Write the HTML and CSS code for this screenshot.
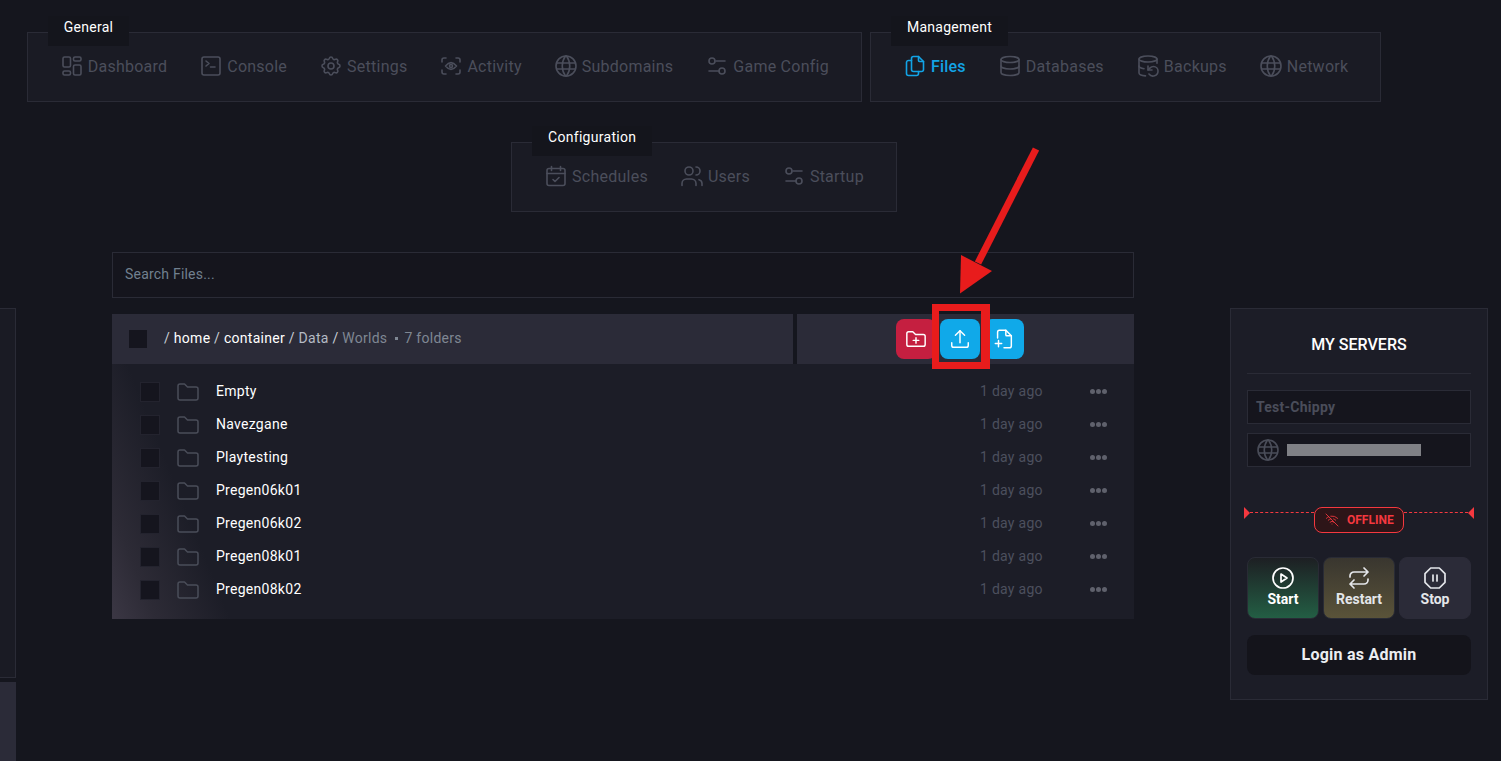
FILE: index.html
```html
<!DOCTYPE html>
<html lang="en">
<head>
<meta charset="utf-8">
<title>Files</title>
<link rel="stylesheet" href="styles.css">
</head>
<body>
<svg class="defs" width="0" height="0" aria-hidden="true">
  <symbol id="i-dash" viewBox="0 0 24 24"><rect x="3" y="3" width="7.5" height="10" rx="1.5"/><rect x="3" y="17" width="7.5" height="4" rx="1.5"/><rect x="13.5" y="3" width="7.5" height="4" rx="1.5"/><rect x="13.5" y="11" width="7.5" height="10" rx="1.5"/></symbol>
  <symbol id="i-term" viewBox="0 0 24 24"><path d="M7 7l3 2.500l-3 2.500M11.500 13h4.500"/><rect x="3" y="3" width="18" height="18" rx="2"/></symbol>
  <symbol id="i-gear" viewBox="0 0 24 24"><path d="M10.325 4.317c.426 -1.756 2.924 -1.756 3.35 0a1.724 1.724 0 0 0 2.573 1.066c1.543 -.94 3.31 .826 2.37 2.37a1.724 1.724 0 0 0 1.065 2.572c1.756 .426 1.756 2.924 0 3.35a1.724 1.724 0 0 0 -1.066 2.573c.94 1.543 -.826 3.31 -2.37 2.37a1.724 1.724 0 0 0 -2.572 1.065c-.426 1.756 -2.924 1.756 -3.35 0a1.724 1.724 0 0 0 -2.573 -1.066c-1.543 .94 -3.31 -.826 -2.37 -2.37a1.724 1.724 0 0 0 -1.065 -2.572c-1.756 -.426 -1.756 -2.924 0 -3.35a1.724 1.724 0 0 0 1.066 -2.573c-.94 -1.543 .826 -3.31 2.37 -2.37c1 .608 2.296 .07 2.572 -1.065z"/><circle cx="12" cy="12" r="3"/></symbol>
  <symbol id="i-activity" viewBox="0 0 24 24"><path d="M3 8V6a2 2 0 0 1 2-2h2M3 16v2a2 2 0 0 0 2 2h2M17 4h2a2 2 0 0 1 2 2v2M17 20h2a2 2 0 0 0 2-2v-2"/><path d="M6.500 12c3.700 -4.500 7.300 -4.500 11 0c-3.700 4.500 -7.300 4.500 -11 0z"/><circle cx="12" cy="12" r="1.500"/></symbol>
  <symbol id="i-globe" viewBox="0 0 24 24"><circle cx="12" cy="12" r="10"/><path d="M2.600 9h18.800M2.600 15h18.800M11.500 2a17 17 0 0 0 0 20M12.500 2a17 17 0 0 1 0 20"/></symbol>
  <symbol id="i-sliders" viewBox="0 0 24 24"><path d="M20 7h-9M14 17H4"/><circle cx="7" cy="7" r="3"/><circle cx="17" cy="17" r="3"/></symbol>
  <symbol id="i-files" viewBox="0 0 24 24"><path d="M15.500 2.500v4a1 1 0 0 0 1 1h4"/><path d="M18.500 17.500h-8a2 2 0 0 1 -2 -2v-11a2 2 0 0 1 2 -2h5l5 5v8a2 2 0 0 1 -2 2z"/><path d="M15.500 17.500v2a2 2 0 0 1 -2 2h-8a2 2 0 0 1 -2 -2v-11a2 2 0 0 1 2 -2h3"/></symbol>
  <symbol id="i-db" viewBox="0 0 24 24"><ellipse cx="12" cy="5.500" rx="9" ry="3"/><path d="M3 5.500v6.500a9 3 0 0 0 18 0v-6.500"/><path d="M3 12v6.500a9 3 0 0 0 18 0v-6.500"/></symbol>
  <symbol id="i-backup" viewBox="0 0 24 24"><ellipse cx="12" cy="5" rx="9" ry="3"/><path d="M3 12a9 3 0 0 0 5 2.690"/><path d="M21 9.300V5"/><path d="M3 5v14a9 3 0 0 0 6.470 2.880"/><path d="M12 12v4h4"/><path d="M13 20a5 5 0 0 0 9-3 4.500 4.500 0 0 0-4.500-4.500c-1.330 0-2.540.54-3.410 1.410L12 16"/></symbol>
  <symbol id="i-cal" viewBox="0 0 24 24"><rect x="3" y="4.500" width="18" height="17" rx="2"/><path d="M16.500 2.500v4M7.500 2.500v4M3 9.500h18M9 15.500l2 2l4 -4"/></symbol>
  <symbol id="i-users" viewBox="0 0 24 24"><circle cx="9" cy="7" r="4"/><path d="M2 21.500v-2a4.500 4.500 0 0 1 4.500 -4.500h5a4.500 4.500 0 0 1 4.500 4.500v2"/><path d="M16 3a4 4 0 0 1 0 8"/><path d="M22 21.500v-2a4 4 0 0 0 -3 -3.850"/></symbol>
  <symbol id="i-folder" viewBox="0 0 24 24"><path d="M4 4h4.500l3 3H20a2 2 0 0 1 2 2v9a2 2 0 0 1-2 2H4a2 2 0 0 1-2-2V6a2 2 0 0 1 2-2z"/></symbol>
  <symbol id="i-folder-plus" viewBox="0 0 24 24"><path d="M4 4h4.500l3 3H20a2 2 0 0 1 2 2v9a2 2 0 0 1-2 2H4a2 2 0 0 1-2-2V6a2 2 0 0 1 2-2z"/><path d="M12 10.500v6M9 13.500h6"/></symbol>
  <symbol id="i-upload" viewBox="0 0 24 24"><path d="M3 16v3a2 2 0 0 0 2 2h14a2 2 0 0 0 2-2v-3"/><path d="M7 8l5-5 5 5"/><path d="M12 3v13"/></symbol>
  <symbol id="i-file-plus" viewBox="0 0 24 24"><path d="M14 2.500v5a1 1 0 0 0 1 1h5"/><path d="M5 11V4.500a2 2 0 0 1 2-2h7l6 6v11a2 2 0 0 1-2 2h-6"/><path d="M2.500 17h7M6 13.500v7"/></symbol>
  <symbol id="i-wifi-off" viewBox="0 0 24 24"><path d="M12 18h.01M9.172 15.172a4 4 0 0 1 5.656 0M6.343 12.343a8 8 0 0 1 3.864 -2.140M14.370 10.358a8 8 0 0 1 3.287 2M3.515 9.515a12 12 0 0 1 3.544 -2.455M10.160 6.140a12 12 0 0 1 10.325 3.374M3 3l18 18"/></symbol>
  <symbol id="i-play" viewBox="0 0 24 24"><circle cx="12" cy="12" r="10"/><path d="M10 8l6 4-6 4z"/></symbol>
  <symbol id="i-repeat" viewBox="0 0 24 24"><path d="M17 2l4 4-4 4M3 11v-1a4 4 0 0 1 4-4h14M7 22l-4-4 4-4M21 13v1a4 4 0 0 1-4 4H3"/></symbol>
  <symbol id="i-stop" viewBox="0 0 24 24"><path d="M10 15V9M14 15V9"/><path d="M7.714 2h8.572L22 7.714v8.572L16.286 22H7.714L2 16.286V7.714z"/></symbol>
</svg>

<nav class="nav">
  <section class="group">
    <h2 class="group-label">General</h2>
    <a class="tab"><svg class="icon"><use href="#i-dash"/></svg>Dashboard</a>
    <a class="tab"><svg class="icon"><use href="#i-term"/></svg>Console</a>
    <a class="tab"><svg class="icon"><use href="#i-gear"/></svg>Settings</a>
    <a class="tab"><svg class="icon"><use href="#i-activity"/></svg>Activity</a>
    <a class="tab"><svg class="icon"><use href="#i-globe"/></svg>Subdomains</a>
    <a class="tab"><svg class="icon"><use href="#i-sliders"/></svg>Game Config</a>
  </section>
  <section class="group">
    <h2 class="group-label">Management</h2>
    <a class="tab tab-active"><svg class="icon"><use href="#i-files"/></svg>Files</a>
    <a class="tab"><svg class="icon"><use href="#i-db"/></svg>Databases</a>
    <a class="tab"><svg class="icon"><use href="#i-backup"/></svg>Backups</a>
    <a class="tab"><svg class="icon"><use href="#i-globe"/></svg>Network</a>
  </section>
  <section class="group">
    <h2 class="group-label">Configuration</h2>
    <a class="tab"><svg class="icon"><use href="#i-cal"/></svg>Schedules</a>
    <a class="tab"><svg class="icon"><use href="#i-users"/></svg>Users</a>
    <a class="tab"><svg class="icon"><use href="#i-sliders"/></svg>Startup</a>
  </section>
</nav>

<main class="main">
  <aside class="sliver">
    <div class="sliver-top"></div>
    <div class="sliver-bottom"></div>
  </aside>

  <div class="content">
    <input class="search" type="text" placeholder="Search Files...">
    <div class="file-head">
      <div class="crumbs">
        <span class="box box-head"></span>
        <span class="path"><span class="sep">/ </span>home<span class="sep"> / </span>container<span class="sep"> / </span><span class="path-mid">Data</span><span class="sep"> / </span><span class="path-last">Worlds</span></span>
        <span class="count">7 folders</span>
      </div>
      <div class="actions">
        <button class="action action-red"><svg class="action-icon"><use href="#i-folder-plus"/></svg></button>
        <button class="action action-blue"><svg class="action-icon"><use href="#i-upload"/></svg></button>
        <button class="action action-blue"><svg class="action-icon"><use href="#i-file-plus"/></svg></button>
      </div>
    </div>
    <ul class="files">
      <li class="file"><span class="box"></span><svg class="folder"><use href="#i-folder"/></svg><span class="name">Empty</span><span class="date">1 day ago</span><span class="dots"><i></i><i></i><i></i></span></li>
      <li class="file"><span class="box"></span><svg class="folder"><use href="#i-folder"/></svg><span class="name">Navezgane</span><span class="date">1 day ago</span><span class="dots"><i></i><i></i><i></i></span></li>
      <li class="file"><span class="box"></span><svg class="folder"><use href="#i-folder"/></svg><span class="name">Playtesting</span><span class="date">1 day ago</span><span class="dots"><i></i><i></i><i></i></span></li>
      <li class="file"><span class="box"></span><svg class="folder"><use href="#i-folder"/></svg><span class="name">Pregen06k01</span><span class="date">1 day ago</span><span class="dots"><i></i><i></i><i></i></span></li>
      <li class="file"><span class="box"></span><svg class="folder"><use href="#i-folder"/></svg><span class="name">Pregen06k02</span><span class="date">1 day ago</span><span class="dots"><i></i><i></i><i></i></span></li>
      <li class="file"><span class="box"></span><svg class="folder"><use href="#i-folder"/></svg><span class="name">Pregen08k01</span><span class="date">1 day ago</span><span class="dots"><i></i><i></i><i></i></span></li>
      <li class="file"><span class="box"></span><svg class="folder"><use href="#i-folder"/></svg><span class="name">Pregen08k02</span><span class="date">1 day ago</span><span class="dots"><i></i><i></i><i></i></span></li>
    </ul>
  </div>

  <aside class="servers">
    <h2 class="servers-title">MY SERVERS</h2>
    <div class="field field-name">Test-Chippy</div>
    <div class="field field-ip"><svg class="icon"><use href="#i-globe"/></svg><span class="redacted"></span></div>
    <div class="status">
      <span class="tri tri-left"></span>
      <span class="dash"></span>
      <span class="badge"><svg class="badge-icon"><use href="#i-wifi-off"/></svg>OFFLINE</span>
      <span class="dash"></span>
      <span class="tri tri-right"></span>
    </div>
    <div class="controls">
      <button class="ctrl ctrl-start"><svg class="ctrl-icon"><use href="#i-play"/></svg>Start</button>
      <button class="ctrl ctrl-restart"><svg class="ctrl-icon"><use href="#i-repeat"/></svg>Restart</button>
      <button class="ctrl ctrl-stop"><svg class="ctrl-icon"><use href="#i-stop"/></svg>Stop</button>
    </div>
    <button class="login">Login as Admin</button>
  </aside>
</main>

<div class="note-box"></div>
<svg class="note-arrow" viewBox="0 0 120 170" aria-hidden="true">
  <path class="note-shaft" d="M106 9L48 123"/>
  <path class="note-head" d="M30 153.500L31 115L62 131z"/>
</svg>
</body>
</html>
```

FILE: styles.css
```css
* { box-sizing: border-box; }

html, body {
  margin: 0;
  height: 761px;
  overflow: hidden;
}

body {
  position: relative;
  background: #15161e;
  font-family: Roboto, "Liberation Sans", sans-serif;
  font-size: 14px;
  color: #fff;
}

.defs { position: absolute; }

/* shared stroke style for symbols */
svg {
  fill: none;
  stroke: currentColor;
  stroke-width: 1.5;
  stroke-linecap: round;
  stroke-linejoin: round;
}

/* ---------- top navigation ---------- */
.nav {
  width: 1408px;
  padding-top: 32px;
  display: flex;
  flex-wrap: wrap;
  justify-content: center;
  gap: 40px 8px;
}

.group {
  position: relative;
  height: 70px;
  padding: 21px 32px 0;
  display: flex;
  align-items: flex-start;
  gap: 32px;
  background: #1a1b24;
  border: 1px solid #2a2b36;
}

.group-label {
  position: absolute;
  left: 20px;
  top: -17px;
  height: 30px;
  margin: 0;
  padding: 0 16px;
  background: #14151c;
  font-size: 14px;
  font-weight: 400;
  letter-spacing: 0.02em;
  line-height: 22px;
  color: #fff;
}

.tab {
  display: flex;
  align-items: center;
  gap: 4px;
  height: 24px;
  font-size: 16px;
  letter-spacing: 0.24px;
  color: #4b4e5b;
}

.tab-active {
  color: #12a4e6;
  font-weight: 500;
}

.icon {
  flex: none;
  width: 24px;
  height: 24px;
  stroke-width: 1.6;
}

/* ---------- main row ---------- */
.main {
  margin-top: 40px;
  display: flex;
  align-items: flex-start;
}

.sliver {
  flex: none;
  width: 16px;
  margin-top: 56px;
  margin-right: 96px;
}

.sliver-top {
  height: 370px;
  background: #1a1b24;
  border: 1px solid #2a2b36;
  border-left: 0;
}

.sliver-bottom {
  height: 90px;
  margin-top: 4px;
  background: #2b2b38;
}

.content {
  flex: none;
  width: 1022px;
  margin-right: 96px;
}

.search {
  display: block;
  width: 100%;
  height: 46px;
  padding: 0 12px 2px;
  background: #15151d;
  border: 1px solid #2a2b36;
  outline: 0;
  font: 14px Roboto, "Liberation Sans", sans-serif;
  letter-spacing: 0.015em;
  color: #fff;
}

.search::placeholder {
  color: #71808f;
  opacity: 1;
}

.file-head {
  margin-top: 16px;
  height: 50px;
  display: flex;
  gap: 4px;
}

.crumbs {
  flex: none;
  width: 681px;
  padding-left: 17px;
  padding-bottom: 2px;
  display: flex;
  align-items: center;
  background: #2b2b38;
  letter-spacing: 0.02em;
}

.box {
  flex: none;
  width: 20px;
  height: 20px;
  background: #15151e;
  border: 1px solid #23232e;
}

.box-head {
  width: 18px;
  height: 18px;
  border: 0;
  margin-top: 2px;
}

.path {
  margin-left: 17px;
  font-size: 14px;
  color: #fff;
  white-space: pre;
}

.sep { color: #c9ced6; }
.path-mid { color: #b4bac4; }
.path-last { color: #7f8793; }

.count {
  margin-left: 8px;
  color: #7f8793;
}

.count::before {
  content: "";
  display: inline-block;
  width: 3px;
  height: 3px;
  margin-right: 6px;
  vertical-align: 3px;
  background: #7f8793;
}

.actions {
  flex: 1;
  padding-right: 11px;
  display: flex;
  justify-content: center;
  align-items: center;
  gap: 4px;
  background: #2b2b38;
}

.action {
  width: 40px;
  height: 40px;
  padding: 0;
  display: flex;
  align-items: center;
  justify-content: center;
  border: 0;
  border-radius: 8px;
  color: #fff;
}

.action-red { background: #c51f40; }
.action-blue { background: #10a9e9; }

.action-icon {
  width: 22px;
  height: 22px;
  stroke-width: 1.6;
}

.files {
  margin: 0;
  padding: 11px 0 13px;
  list-style: none;
  background: linear-gradient(68deg, #3b3744 0, #2d2b36 40px, #1c1d27 110px);
}

.file {
  height: 33px;
  padding-left: 28px;
  display: flex;
  align-items: center;
}

.folder {
  flex: none;
  width: 24px;
  height: 24px;
  margin-left: 16px;
  color: #4a4d59;
}

.name {
  margin-left: 16px;
  padding-bottom: 2px;
  flex: 1;
  letter-spacing: 0.02em;
  color: #fff;
}

.date {
  width: 110px;
  padding-bottom: 2px;
  color: #4c505e;
  letter-spacing: 0.02em;
}

.dots {
  display: flex;
  gap: 1px;
  width: 44px;
}

.dots i {
  width: 5px;
  height: 5px;
  border-radius: 50%;
  background: #5f616c;
}

/* ---------- servers panel ---------- */
.servers {
  flex: none;
  width: 258px;
  height: 392px;
  margin-top: 56px;
  padding: 0 16px;
  background: #1c1d27;
  border: 1px solid #2a2b36;
}

.servers-title {
  height: 65px;
  margin: 0 0 16px;
  padding-top: 26px;
  border-bottom: 1px solid #2a2b36;
  font-size: 16px;
  font-weight: 500;
  line-height: 20px;
  text-align: center;
  color: #fff;
}

.field {
  height: 34px;
  padding-left: 8px;
  display: flex;
  align-items: center;
  background: #15151d;
  border: 1px solid #2a2b36;
}

.field-name {
  font-weight: 700;
  letter-spacing: 0.018em;
  color: #4a4d5a;
}

.field-ip {
  margin-top: 9px;
  gap: 7px;
  color: #4a4d59;
}

.redacted {
  width: 134px;
  height: 12px;
  background: #7f8085;
}

.status {
  margin: 40px -3px 0;
  display: flex;
  align-items: flex-start;
}

.tri {
  flex: none;
  width: 0;
  height: 0;
  border-top: 6px solid transparent;
  border-bottom: 6px solid transparent;
}

.tri-left { border-left: 6px solid #f5383f; }
.tri-right { border-right: 6px solid #f5383f; }

.dash {
  flex: 1;
  margin-top: 5px;
  border-top: 1px dashed #f5383f;
}

.badge {
  flex: none;
  width: 90px;
  height: 26px;
  padding-left: 9px;
  display: flex;
  align-items: center;
  gap: 7px;
  background: #2d1518;
  border: 1px solid #f5383f;
  border-radius: 8px;
  font-size: 12px;
  font-weight: 700;
  color: #f5383f;
}

.badge-icon {
  width: 16px;
  height: 16px;
  stroke-width: 1.3;
}

.controls {
  margin-top: 24px;
  display: flex;
  gap: 4px;
}

.ctrl {
  flex: 1;
  height: 62px;
  padding: 8px 0 0;
  display: flex;
  flex-direction: column;
  align-items: center;
  gap: 1px;
  border: 1px solid transparent;
  border-radius: 8px;
  font: 700 14px Roboto, "Liberation Sans", sans-serif;
  color: #e4e6ea;
}

.ctrl-icon {
  width: 24px;
  height: 24px;
  stroke-width: 1.7;
}

.ctrl-start { background: linear-gradient(#1d1f23, #235e44); border-color: #292b35; color: #fff; }
.ctrl-restart { background: linear-gradient(#39362f, #5a5339); border-color: #292b35; }
.ctrl-stop { background: #2b2b38; border-color: #2b2b38; }

.login {
  display: block;
  width: 100%;
  height: 40px;
  margin-top: 16px;
  padding: 0 0 2px;
  background: #14141b;
  border: 0;
  border-radius: 8px;
  font: 700 16px Roboto, "Liberation Sans", sans-serif;
  letter-spacing: 0.015em;
  color: #eceef1;
}

/* ---------- red annotation laid over the page ---------- */
.note-box {
  position: absolute;
  left: 932px;
  top: 304px;
  width: 58px;
  height: 65px;
  border: 7px solid #e81c1c;
  border-right-width: 9px;
}

.note-arrow {
  position: absolute;
  left: 930px;
  top: 140px;
  width: 120px;
  height: 170px;
}

.note-shaft {
  stroke: #e81c1c;
  stroke-width: 7;
  stroke-linecap: butt;
}

.note-head {
  fill: #e81c1c;
  stroke: none;
}
```
